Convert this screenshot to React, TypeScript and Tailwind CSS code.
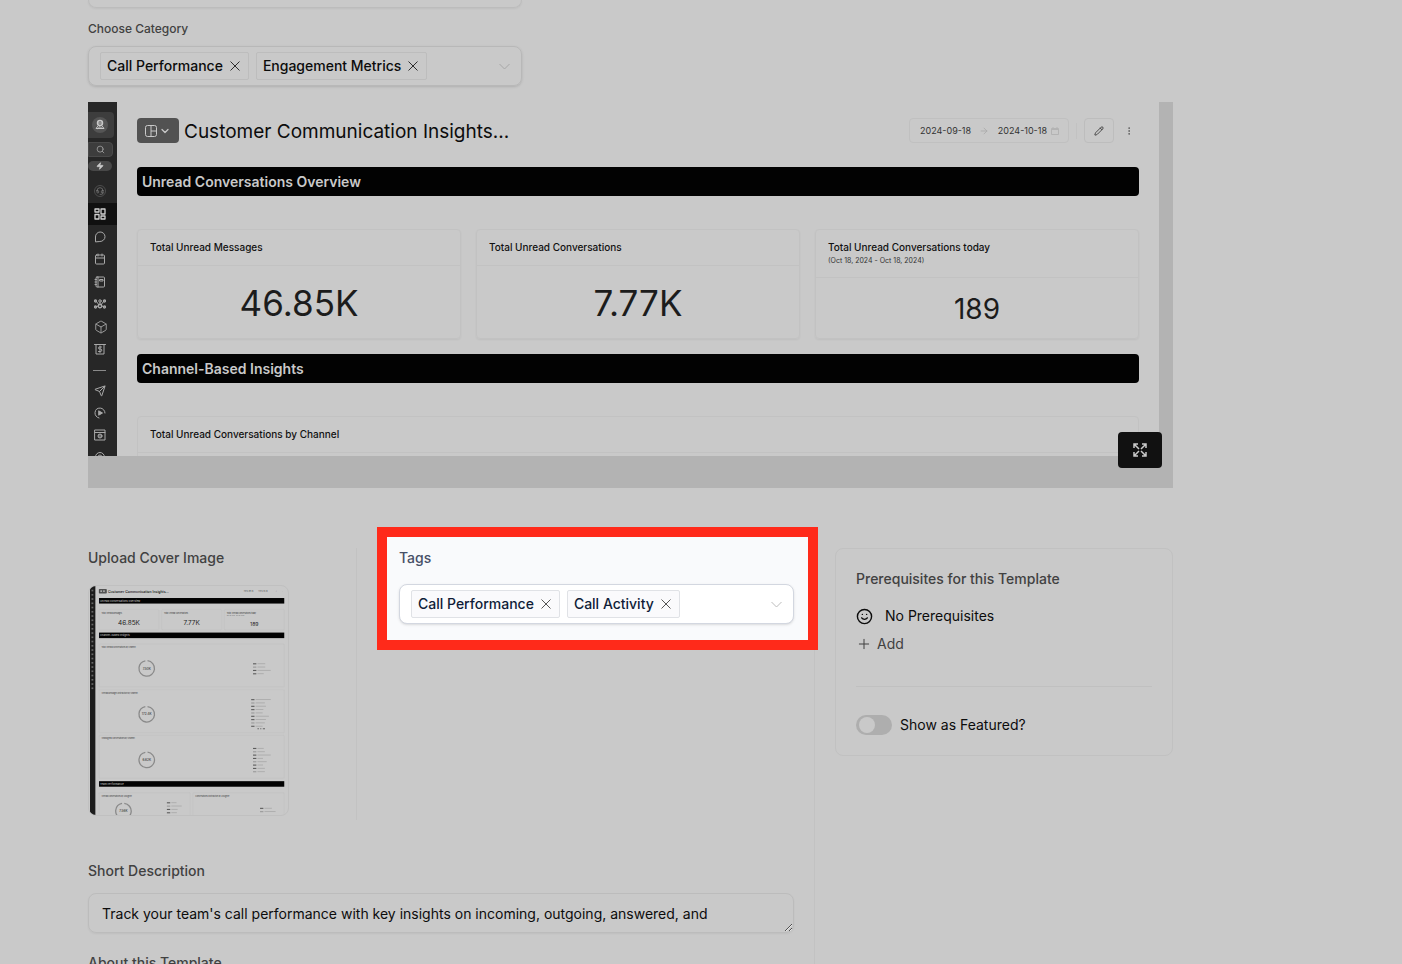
import clsx from "clsx";
import {
  ArrowRight,
  Box,
  Calendar,
  ChevronDown,
  Headset,
  MessageCircle,
  MoreVertical,
  Pencil,
  Plus,
  Search,
  Send,
  Smile,
  Zap,
} from "lucide-react";
import type { ReactNode } from "react";
import { useState } from "react";

interface TagSelectProps {
  id: string;
  initialTags: string[];
  highlighted?: boolean;
}

const TagSelect = ({ id, initialTags, highlighted }: TagSelectProps) => {
  const [tags, setTags] = useState(initialTags);

  return (
    <div
      className={clsx(
        "flex h-10 items-center gap-[7px] rounded-lg border px-[11px] shadow-sm",
        highlighted ? "border-[#d3d7e0] bg-white" : "border-[#b8b8b8]",
      )}
    >
      {tags.map((tag) => (
        <span
          key={tag}
          className={clsx(
            "flex h-7 items-center gap-[7px] whitespace-nowrap rounded-xs border pl-1.5 pr-2 text-sm font-medium",
            highlighted
              ? "border-[#e0e2e6] bg-[#fafafc] text-[#101d38]"
              : "border-[#bdbdbd] text-[#0c0c0c]",
          )}
        >
          {tag}
          <button
            type="button"
            aria-label={`Remove ${tag}`}
            onClick={() => setTags(tags.filter((item) => item !== tag))}
            className={highlighted ? "text-[#555]" : "text-[#2d2d2d]"}
          >
            <svg width="10" height="10" viewBox="0 0 10 10" stroke="currentColor">
              <path d="m.5.5 9 9M9.5.5l-9 9" />
            </svg>
          </button>
        </span>
      ))}
      <button
        id={id}
        type="button"
        aria-label="Open options"
        className={clsx(
          "ml-auto",
          highlighted ? "text-[#bcbcbc]" : "text-[#a6a6a6]",
        )}
      >
        <svg
          width="11"
          height="7"
          viewBox="0 0 11 7"
          fill="none"
          stroke="currentColor"
        >
          <path d="m.5 1 5 5 5-5" />
        </svg>
      </button>
    </div>
  );
};

const Glyph = ({ children }: { children: ReactNode }) => (
  <svg
    width="12"
    height="12"
    viewBox="0 0 24 24"
    fill="none"
    stroke="currentColor"
    strokeWidth="2"
    strokeLinecap="round"
    strokeLinejoin="round"
  >
    {children}
  </svg>
);

const AvatarGlyph = () => (
  <Glyph>
    <circle cx="12" cy="8" r="5" strokeWidth="3" />
    <path d="M8 14 4 19h16l-4-5M9 8h6M8 19l4-4 4 4" />
  </Glyph>
);

const DashboardGlyph = () => (
  <Glyph>
    <rect x="2" y="2" width="8" height="6" strokeWidth="2.6" />
    <rect x="2" y="13" width="8" height="9" strokeWidth="2.6" />
    <rect x="14" y="2" width="8" height="10" strokeWidth="2.6" />
    <rect x="14" y="16" width="8" height="6" strokeWidth="2.6" />
  </Glyph>
);

const ChatGlyph = () => (
  <Glyph>
    <path d="M3 21v-9a9.5 9.5 0 1 1 9.500 9z" />
  </Glyph>
);

const NotebookGlyph = () => (
  <Glyph>
    <rect x="4" y="2" width="17" height="20" rx="2" />
    <path d="M8 2v20M12 7h6v3h-6zM2 7h3M2 12h3M2 17h3" />
  </Glyph>
);

const NetworkGlyph = () => (
  <Glyph>
    <circle cx="12" cy="6" r="2.5" />
    <circle cx="12" cy="16" r="3.5" strokeWidth="2.6" />
    <circle cx="3" cy="6" r="2" strokeWidth="2.6" />
    <circle cx="21" cy="6" r="2" strokeWidth="2.6" />
    <circle cx="3" cy="18" r="2" strokeWidth="2.6" />
    <circle cx="21" cy="18" r="2" strokeWidth="2.6" />
    <path d="m5 7 5 7M19 7l-5 7M5 17l4-1M19 17l-4-1M12 9v4" />
  </Glyph>
);

const BillingGlyph = () => (
  <Glyph>
    <path d="M1 3h22M4 3v19h16V3" />
    <path d="M15 8h-4a2 2 0 0 0 0 4h2a2 2 0 0 1 0 5H9M12 6v13" />
  </Glyph>
);

const PlayGlyph = () => (
  <Glyph>
    <path d="M10 22A10 10 0 1 1 22 12" />
    <path d="m10 8 7 4-7 4z" fill="currentColor" />
  </Glyph>
);

const BrowserGlyph = () => (
  <Glyph>
    <path d="M2 2h20v20H2zM2 7h20" />
    <circle cx="12" cy="14" r="4" fill="currentColor" fillOpacity="0.5" />
  </Glyph>
);

const SupportGlyph = () => (
  <Glyph>
    <circle cx="12" cy="12" r="9" />
    <circle cx="12" cy="12" r="4" />
  </Glyph>
);

const sideItems = [
  { label: "Dashboards", icon: <DashboardGlyph />, active: true },
  { label: "Conversations", icon: <ChatGlyph /> },
  { label: "Calendar", icon: <Calendar size={12} /> },
  { label: "Contacts", icon: <NotebookGlyph /> },
  { label: "Network", icon: <NetworkGlyph /> },
  { label: "Products", icon: <Box size={14} strokeWidth={1.5} /> },
  { label: "Billing", icon: <BillingGlyph /> },
];

const moreItems = [
  { label: "Campaigns", icon: <Send size={12} /> },
  { label: "Automation", icon: <PlayGlyph /> },
  { label: "Sites", icon: <BrowserGlyph /> },
  { label: "Support", icon: <SupportGlyph /> },
];

const PreviewSidebar = () => (
  <aside className="flex w-[29px] shrink-0 flex-col bg-[#272727] pt-2.5 text-[#a9a9a9] [&>*]:shrink-0">
    <div className="flex h-[26px] w-[26px] items-center justify-center rounded-r bg-[#3d3d3d] pr-0.5">
      <span className="flex size-4 items-center justify-center rounded-full bg-[#555] text-[#c9c9c9]">
        <AvatarGlyph />
      </span>
    </div>
    <button
      type="button"
      aria-label="Search"
      className="mt-1 flex h-[15px] w-[25px] items-center justify-center rounded-r border border-[#4a4a4a] bg-[#3d3d3d]"
    >
      <Search size={9} />
    </button>
    <button
      type="button"
      aria-label="Quick actions"
      className="mt-1 flex h-2.5 w-6 items-center justify-center rounded-full bg-[#484848] text-[#c9c9c9]"
    >
      <Zap size={8} fill="currentColor" />
    </button>
    <div className="mb-1 mt-3 flex h-4 w-6 items-center justify-center">
      <span className="flex size-3 items-center justify-center rounded-full border border-[#4d4d4d] text-[#858585]">
        <Headset size={8} />
      </span>
    </div>
    <nav className="flex h-[157px] flex-col justify-between">
      {sideItems.map((item) => (
        <a
          key={item.label}
          href="#"
          aria-label={item.label}
          className={clsx(
            "flex h-[22px] items-center pl-1.5",
            item.active && "bg-[#101010] text-[#d0d0d0]",
          )}
        >
          {item.icon}
        </a>
      ))}
    </nav>
    <hr className="ml-[5px] mt-2.5 w-[13px] border-[#8a8a8a]" />
    <nav className="mt-[9px] flex flex-col">
      {moreItems.map((item) => (
        <a
          key={item.label}
          href="#"
          aria-label={item.label}
          className="flex h-[22px] items-center pl-1.5"
        >
          {item.icon}
        </a>
      ))}
    </nav>
  </aside>
);

const Banner = ({ children }: { children: ReactNode }) => (
  <h3 className="flex h-[29px] items-center rounded bg-[#020202] px-[5px] text-sm font-semibold text-[#c9c9c9]">
    {children}
  </h3>
);

interface StatCardProps {
  title: string;
  value: string;
  period?: string;
}

const StatCard = ({ title, value, period }: StatCardProps) => (
  <section className="flex h-[110px] flex-col rounded border border-[#c2c2c2] shadow-xs">
    <header className="border-b border-[#c2c2c2] px-3 py-2.5">
      <h4 className="text-[10px] font-medium leading-[15px] text-[#111]">
        {title}
      </h4>
      {period && <p className="text-[7px] leading-3 text-[#333]">{period}</p>}
    </header>
    <p
      className={clsx(
        "flex flex-1 items-center justify-center pt-0.5 text-[#1c1c1c]",
        period ? "text-[28px]" : "text-[35px]",
      )}
    >
      {value}
    </p>
  </section>
);

const DashboardPreview = () => (
  <div className="relative mt-4 bg-[#b3b3b3] pb-8 pr-3.5">
    <div className="flex h-[354px] overflow-hidden bg-[#c9c9c9]">
      <PreviewSidebar />
      <div className="min-w-0 flex-1 px-5 pt-4">
        <header className="flex h-[25px] items-center">
          <button
            type="button"
            aria-label="Change layout"
            className="flex h-full w-[42px] items-center justify-center gap-0.5 rounded bg-[#525252] text-[#c9c9c9]"
          >
            <svg
              width="12"
              height="12"
              viewBox="0 0 12 12"
              fill="none"
              stroke="currentColor"
            >
              <rect x="0.5" y="0.5" width="11" height="11" rx="2" />
              <path d="M6 1v10M6 6h5" />
            </svg>
            <ChevronDown size={12} strokeWidth={2.5} />
          </button>
          <h2 className="ml-[5px] whitespace-nowrap pt-0.5 text-[19px] leading-7 text-[#0c0c0c]">
            Customer Communication Insights...
          </h2>
          <button
            type="button"
            className="ml-auto flex h-full w-40 items-center rounded border border-[#c0c0c0] pl-2.5 text-[9px] text-[#333]"
          >
            <span>2024-09-18</span>
            <ArrowRight size={10} className="mx-auto text-[#aaa]" />
            <span>2024-10-18</span>
            <svg
              width="8"
              height="8"
              viewBox="0 0 8 8"
              fill="none"
              stroke="#b3b3b3"
              className="ml-1 mr-[9px]"
            >
              <path d="M.5 1.5h7v6h-7zM.5 2.5h7M2 0v2M6 0v2" />
            </svg>
          </button>
          <span className="ml-[7px] h-4 w-px bg-[#c2c2c2]" />
          <button
            type="button"
            aria-label="Edit dashboard"
            className="ml-[7px] flex h-full w-[30px] items-center justify-center rounded border border-[#bdbdbd] text-[#333]"
          >
            <Pencil size={10} />
          </button>
          <button
            type="button"
            aria-label="More"
            className="ml-2.5 mr-[5px] text-[#444]"
          >
            <MoreVertical size={10} strokeWidth={1.5} />
          </button>
        </header>
        <div className="mt-6">
          <Banner>Unread Conversations Overview</Banner>
        </div>
        <div className="mb-[15px] mt-[33px] grid grid-cols-3 gap-[15px]">
          <StatCard title="Total Unread Messages" value="46.85K" />
          <StatCard title="Total Unread Conversations" value="7.77K" />
          <StatCard
            title="Total Unread Conversations today"
            period="(Oct 18, 2024 - Oct 18, 2024)"
            value="189"
          />
        </div>
        <Banner>Channel-Based Insights</Banner>
        <section className="mt-[33px] h-[240px] rounded border border-[#c2c2c2]">
          <h4 className="border-b border-[#c2c2c2] px-3 py-2.5 text-[10px] font-medium leading-[15px] text-[#111]">
            Total Unread Conversations by Channel
          </h4>
        </section>
      </div>
    </div>
    <button
      type="button"
      aria-label="View full screen"
      className="absolute bottom-5 right-[11px] flex h-9 w-11 items-center justify-center rounded bg-[#111] text-[#c9c9c9]"
    >
      <svg
        width="14"
        height="14"
        viewBox="0 0 14 14"
        fill="none"
        stroke="currentColor"
        strokeWidth="1.5"
      >
        <path d="M1 5V1h4M9 1h4v4M1 9v4h4M13 9v4H9M1 1l5 5M13 1 8 6M1 13l5-5M13 13 8 8" />
      </svg>
    </button>
  </div>
);

interface LegendProps {
  x: number;
  y: number;
  widths: number[];
}

const Legend = ({ x, y, widths }: LegendProps) => (
  <g>
    {widths.map((width, i) => (
      <g key={i}>
        <rect
          x={x}
          y={y + i * 18}
          width="18"
          height="6"
          fill={i % 3 === 1 ? "#999" : "#5c5c5c"}
        />
        <rect x={x + 24} y={y + i * 18} width={width} height="5" fill="#acacac" />
      </g>
    ))}
  </g>
);

interface DonutProps {
  x: number;
  y: number;
  label: string;
}

const Donut = ({ x, y, label }: DonutProps) => (
  <g>
    <circle
      cx={x}
      cy={y}
      r="42"
      fill="none"
      stroke="#8a8a8a"
      strokeWidth="7"
      strokeDasharray="250 14"
      transform={`rotate(-84 ${x} ${y})`}
    />
    <text x={x} y={y + 6} textAnchor="middle" fontSize="17" fill="#222">
      {label}
    </text>
  </g>
);

// Small version of the whole dashboard, in the units of the large preview.
const CoverThumbnail = () => (
  <svg
    viewBox="0 0 1071 1239"
    className="block h-full w-full"
    preserveAspectRatio="xMinYMin slice"
    role="img"
    aria-label="Cover image"
  >
    <rect width="29" height="1239" fill="#1c1c1c" />
    {Array.from({ length: 24 }, (_, i) => (
      <rect key={i} x="8" y={20 + i * 23} width="10" height="9" fill="#666" />
    ))}
    <rect x="48" y="16" width="43" height="25" rx="4" fill="#525252" />
    <path d="M56 28h26" stroke="#c9c9c9" strokeWidth="7" strokeDasharray="9 6" />
    <text x="97" y="36" fontSize="19" fontWeight="500" fill="#0c0c0c">
      Customer Communication Insights...
    </text>
    <g fontSize="9" fill="#333">
      <text x="832" y="32">2024-09-18</text>
      <text x="911" y="32">2024-10-18</text>
      <text x="1006" y="33">/</text>
      <text x="1040" y="32">:</text>
    </g>
    <g fill="#020202">
      <rect x="49" y="65" width="1002" height="30" />
      <rect x="49" y="252" width="1002" height="30" />
      <rect x="49" y="1056" width="1002" height="30" />
    </g>
    <g fontSize="14" fontWeight="600" fill="#a9a9a9">
      <text x="54" y="85">Unread Conversations Overview</text>
      <text x="54" y="272">Channel-Based Insights</text>
      <text x="54" y="1076">Team Performance</text>
    </g>
    <g fill="none" stroke="#c1c1c1" strokeWidth="3">
      <rect x="49" y="127" width="324" height="110" rx="4" />
      <rect x="388" y="127" width="324" height="110" rx="4" />
      <rect x="727" y="127" width="324" height="110" rx="4" />
      <rect x="49" y="314" width="1002" height="232" rx="4" />
      <rect x="49" y="561" width="1002" height="232" rx="4" />
      <rect x="49" y="808" width="1002" height="232" rx="4" />
      <rect x="49" y="1118" width="493" height="160" rx="4" />
      <rect x="557" y="1118" width="493" height="160" rx="4" />
    </g>
    <g fontSize="10" fill="#333">
      <text x="62" y="149">Total Unread Messages</text>
      <text x="401" y="149">Total Unread Conversations</text>
      <text x="740" y="149">Total Unread Conversations today</text>
      <text x="740" y="162" fontSize="7">(Oct 18, 2024 - Oct 18, 2024)</text>
      <text x="62" y="335">Total Unread Conversations by Channel</text>
      <text x="62" y="582">Unread Messages Distribution by Channel</text>
      <text x="62" y="829">Unassigned Conversations by Channel</text>
      <text x="62" y="1140">Unread Conversations by Assignee</text>
      <text x="570" y="1140">Conversations Distribution by Assignee</text>
    </g>
    <g fontSize="35" fill="#1c1c1c" textAnchor="middle">
      <text x="211" y="212">46.85K</text>
      <text x="550" y="212">7.77K</text>
      <text x="889" y="216" fontSize="28">
        189
      </text>
    </g>
    <Donut x={307} y={446} label="7.50K" />
    <Donut x={307} y={694} label="172.4K" />
    <Donut x={307} y={941} label="6.62K" />
    <Donut x={181} y={1218} label="7.56K" />
    <Legend x={882} y={418} widths={[42, 42, 72, 34]} />
    <Legend x={872} y={612} widths={[82, 50, 56, 42, 38, 72, 56, 50, 38]} />
    <path d="M906 772h8M921 772h6M935 772h12" stroke="#666" strokeWidth="6" />
    <Legend x={882} y={876} widths={[34, 40, 72, 30, 50, 30, 40, 40]} />
    <Legend x={416} y={1170} widths={[28, 56, 34, 30]} />
    <Legend x={920} y={1200} widths={[40, 60]} />
  </svg>
);

const fieldLabel = "text-sm font-medium leading-5 text-[#414141]";

export default function App() {
  const [featured, setFeatured] = useState(false);

  return (
    <main className="h-screen overflow-hidden bg-[#c9c9c9] pl-[88px] pr-[229px] font-['Inter',sans-serif]">
      <div className="w-[434px]">
        <input
          type="text"
          aria-label="Template name"
          className="block h-2 w-full rounded-b-lg border border-t-0 border-[#bcbcbc] bg-transparent shadow-xs"
        />
        <label
          htmlFor="category"
          className="mb-[7px] mt-[11px] block text-xs font-medium leading-5 text-[#414141]"
        >
          Choose Category
        </label>
        <TagSelect
          id="category"
          initialTags={["Call Performance", "Engagement Metrics"]}
        />
      </div>

      <DashboardPreview />

      <div className="mt-[60px] flex items-start gap-5">
        <div className="min-w-0 flex-1 border-r border-[#c2c2c2] pr-5">
          <div className="flex items-start">
            <section className="h-[272px] w-[269px] shrink-0 border-r border-[#c2c2c2]">
              <h2 className={fieldLabel}>Upload Cover Image</h2>
              <button
                type="button"
                aria-label="Change cover image"
                className="mt-[17px] block h-[231px] w-[201px] overflow-hidden rounded-lg border border-[#c0c0c0] pl-px pr-0.5"
              >
                <CoverThumbnail />
              </button>
            </section>
            <section className="relative z-10 -mr-6 -mt-[21px] ml-5 h-[123px] flex-1 border-10 border-[#ff2a1a] bg-[#f9fafc] pl-3 pr-3.5 pt-[11px]">
              <label
                htmlFor="tags"
                className="mb-4 block text-sm font-medium leading-5 text-[#475067]"
              >
                Tags
              </label>
              <TagSelect
                id="tags"
                initialTags={["Call Performance", "Call Activity"]}
                highlighted
              />
            </section>
          </div>

          <label htmlFor="short" className={clsx("mt-[41px] block", fieldLabel)}>
            Short Description
          </label>
          <textarea
            id="short"
            rows={1}
            defaultValue="Track your team's call performance with key insights on incoming, outgoing, answered, and"
            className="mt-3 block h-10 w-full overflow-hidden rounded-lg border border-[#bcbcbc] bg-transparent px-[13px] py-2.5 text-sm leading-5 text-[#0c0c0c] shadow-xs"
          />
          <label htmlFor="about" className={clsx("mt-5 block", fieldLabel)}>
            About this Template
          </label>
          <textarea
            id="about"
            className="mt-3 block h-40 w-full rounded-lg border border-[#bcbcbc] bg-transparent"
          />
        </div>

        <aside className="w-[338px] rounded-lg border border-[#c1c1c1] px-5 pb-5 pt-5">
          <h2 className={fieldLabel}>Prerequisites for this Template</h2>
          <p className="mt-[17px] flex items-center gap-3 text-sm leading-5 text-[#0c0c0c]">
            <Smile size={17} />
            No Prerequisites
          </p>
          <button
            type="button"
            className="mt-2 flex items-center gap-[5px] text-sm leading-5 text-[#414141]"
          >
            <Plus size={16} strokeWidth={1.5} />
            Add
          </button>
          <hr className="mb-7 mt-8 border-[#c0c0c0]" />
          <label className="flex items-center gap-2 text-sm leading-5 text-[#0c0c0c]">
            <input
              type="checkbox"
              role="switch"
              checked={featured}
              onChange={(e) => setFeatured(e.target.checked)}
              className="flex h-5 w-9 appearance-none items-center rounded-full bg-[#aeaeae] px-[3px] before:size-4 before:rounded-full before:bg-[#c9c9c9] checked:justify-end checked:bg-[#444]"
            />
            Show as Featured?
          </label>
        </aside>
      </div>
    </main>
  );
}
